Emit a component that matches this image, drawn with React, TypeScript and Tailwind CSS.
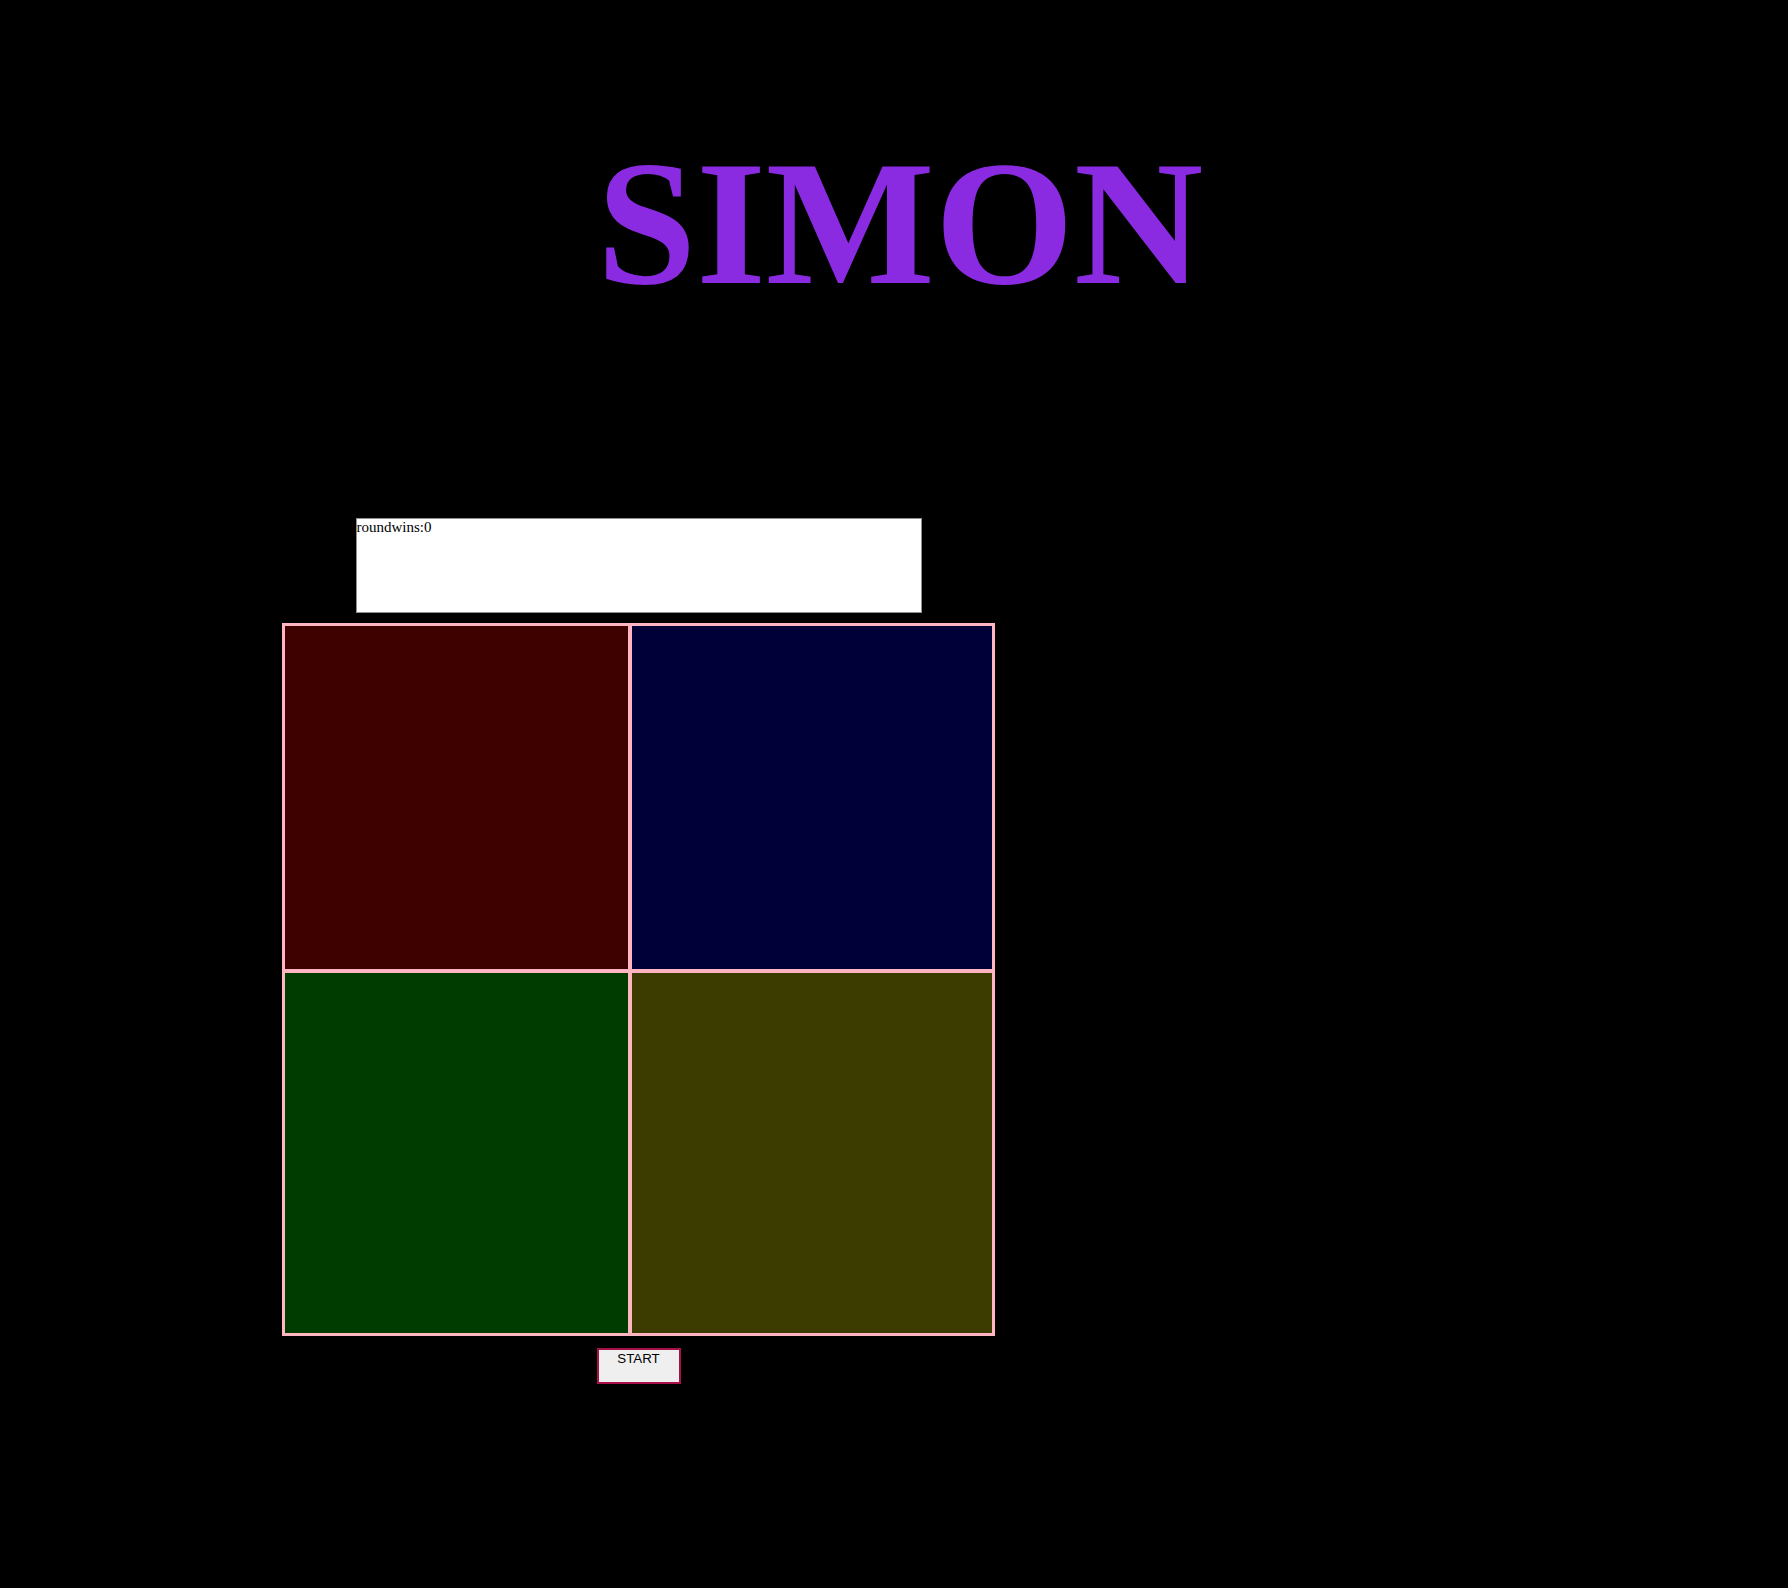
export default function App() {
  const cells = [
    "bg-[#3f0000]",
    "bg-[#000038]",
    "bg-[#003b00]",
    "bg-[#3d3c00]",
  ];

  return (
    <div className="min-h-screen bg-black">
      <h1 className="pl-[12px] pt-[133px] text-center font-['Liberation_Serif','Times_New_Roman',serif] text-[179px] font-bold leading-none text-[#8a2be2]">
        SIMON
      </h1>

      <div className="ml-[282px] mt-[206px] flex w-[713px] flex-col items-center">
        {/* score panel */}
        <div className="h-[95px] w-[566px] border border-[#8f8f8f] bg-white font-['Liberation_Serif','Times_New_Roman',serif] text-[15px] leading-[1.15] text-black">
          roundwins:0
        </div>

        {/* game pads */}
        <div className="mt-[10px] grid grid-cols-[347px_364px] grid-rows-[347px_364px] border border-[#ffb6c1]">
          {cells.map((c) => (
            <div key={c} className={`border-2 border-[#ffb6c1] ${c}`} />
          ))}
        </div>

        <button className="mt-[12px] flex h-[36px] w-[84px] items-start justify-center border-2 border-[#a8104a] bg-[#efefef] px-[6px] pt-px font-['Liberation_Sans',Arial,sans-serif] text-[13.33px] leading-[1.15] text-black">
          START
        </button>
      </div>
    </div>
  );
}
